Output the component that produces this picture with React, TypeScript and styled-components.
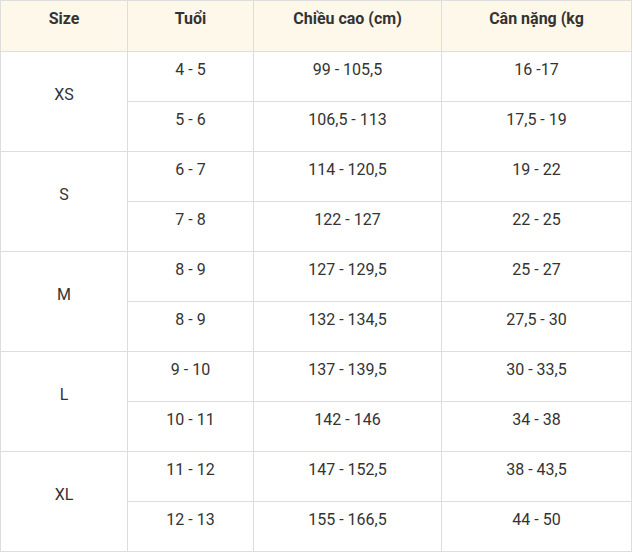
import React from "react";
import styled, { createGlobalStyle } from "styled-components";

const Global = createGlobalStyle`
  html, body { margin: 0; padding: 0; background: #fff; }
  body { font-family: Roboto, "Noto Sans", Arial, sans-serif; }
`;

const Table = styled.table`
  border-collapse: collapse;
  width: 631px;
  table-layout: fixed;
  font-family: Roboto, "Noto Sans", Arial, sans-serif;
  font-size: 16px;
  color: #333;
`;

const Col = styled.col<{ $w: number }>`
  width: ${(p) => p.$w}px;
`;

const HeadCell = styled.th`
  border: 1px solid #ddd;
  background: #fef8ea;
  height: 51px;
  box-sizing: border-box;
  padding: 8px 10px 0;
  vertical-align: top;
  font-weight: 700;
  line-height: 20px;
  text-align: center;
  color: #333;
`;

const Cell = styled.td<{ $middle?: boolean }>`
  border: 1px solid #ddd;
  height: 50px;
  box-sizing: border-box;
  padding: ${(p) => (p.$middle ? "0 10px 14px" : "8px 10px 0")};
  vertical-align: ${(p) => (p.$middle ? "middle" : "top")};
  line-height: 20px;
  text-align: center;
`;

type Group = { size: string; rows: [string, string, string][] };

const data: Group[] = [
  { size: "XS", rows: [["4 - 5", "99 - 105,5", "16 -17"], ["5 - 6", "106,5 - 113", "17,5 - 19"]] },
  { size: "S", rows: [["6 - 7", "114 - 120,5", "19 - 22"], ["7 - 8", "122 - 127", "22 - 25"]] },
  { size: "M", rows: [["8 - 9", "127 - 129,5", "25 - 27"], ["8 - 9", "132 - 134,5", "27,5 - 30"]] },
  { size: "L", rows: [["9 - 10", "137 - 139,5", "30 - 33,5"], ["10 - 11", "142 - 146", "34 - 38"]] },
  { size: "XL", rows: [["11 - 12", "147 - 152,5", "38 - 43,5"], ["12 - 13", "155 - 166,5", "44 - 50"]] },
];

export default function App() {
  return (
    <>
      <Global />
      <Table>
        <colgroup>
          <Col $w={127} />
          <Col $w={126} />
          <Col $w={188} />
          <Col $w={190} />
        </colgroup>
        <thead>
          <tr>
            <HeadCell>Size</HeadCell>
            <HeadCell>Tuổi</HeadCell>
            <HeadCell>Chiều cao (cm)</HeadCell>
            <HeadCell>Cân nặng (kg</HeadCell>
          </tr>
        </thead>
        <tbody>
          {data.map((g) =>
            g.rows.map((r, i) => (
              <tr key={g.size + i}>
                {i === 0 && (
                  <Cell $middle rowSpan={g.rows.length}>
                    {g.size}
                  </Cell>
                )}
                <Cell>{r[0]}</Cell>
                <Cell>{r[1]}</Cell>
                <Cell>{r[2]}</Cell>
              </tr>
            ))
          )}
        </tbody>
      </Table>
    </>
  );
}
